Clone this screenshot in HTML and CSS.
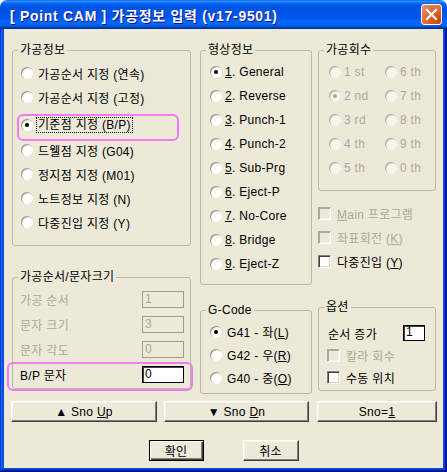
FILE: index.html
```html
<!DOCTYPE html>
<html lang="ko">
<head>
<meta charset="utf-8">
<title>Point CAM</title>
<link rel="stylesheet" href="styles.css">
</head>
<body>
<div class="window">
  <div class="titlebar">
    <span class="title">[ Point CAM ] 가공정보 입력 (v17-9501)</span>
    <span class="close"><svg width="13" height="13" viewBox="0 0 13 13"><path d="M2 2 L11 11 M11 2 L2 11" stroke="#fff" stroke-width="2.2" stroke-linecap="square"/></svg></span>
  </div>
  <div class="frame">
    <div class="client">
      <div class="columns">
        <div class="col col1">
          <div class="group g-info">
            <div class="gtitle">가공정보</div>
            <div class="list">
              <div class="rrow"><span class="radio"></span><span>가공순서 지정 (연속)</span></div>
              <div class="rrow"><span class="radio"></span><span>가공순서 지정 (고정)</span></div>
              <div class="rrow r3"><span class="radio on"></span><span class="focus">기준점 지정 (B/P)</span><span class="mark"></span></div>
              <div class="rrow r4"><span class="radio"></span><span>드웰점 지정 (G04)</span></div>
              <div class="rrow"><span class="radio"></span><span>정지점 지정 (M01)</span></div>
              <div class="rrow"><span class="radio"></span><span>노트정보 지정 (N)</span></div>
              <div class="rrow"><span class="radio"></span><span>다중진입 지정 (Y)</span></div>
            </div>
          </div>
          <div class="group g-size">
            <div class="gtitle">가공순서/문자크기</div>
            <div class="fields">
              <div class="frow dis"><span>가공 순서</span><span class="tbox">1</span></div>
              <div class="frow dis"><span>문자 크기</span><span class="tbox">3</span></div>
              <div class="frow dis"><span>문자 각도</span><span class="tbox">0</span></div>
              <div class="frow bp"><span>B/P 문자</span><span class="tbox">0</span><span class="mark"></span></div>
            </div>
          </div>
        </div>
        <div class="col col2">
          <div class="group g-shape">
            <div class="gtitle">형상정보</div>
            <div class="list">
              <div class="rrow"><span class="radio on"></span><span><u>1</u>. General</span></div>
              <div class="rrow"><span class="radio"></span><span><u>2</u>. Reverse</span></div>
              <div class="rrow"><span class="radio"></span><span><u>3</u>. Punch-1</span></div>
              <div class="rrow"><span class="radio"></span><span><u>4</u>. Punch-2</span></div>
              <div class="rrow"><span class="radio"></span><span><u>5</u>. Sub-Prg</span></div>
              <div class="rrow"><span class="radio"></span><span><u>6</u>. Eject-P</span></div>
              <div class="rrow"><span class="radio"></span><span><u>7</u>. No-Core</span></div>
              <div class="rrow"><span class="radio"></span><span><u>8</u>. Bridge</span></div>
              <div class="rrow"><span class="radio"></span><span><u>9</u>. Eject-Z</span></div>
            </div>
          </div>
          <div class="group g-gcode">
            <div class="gtitle">G-Code</div>
            <div class="list">
              <div class="rrow"><span class="radio on"></span><span>G41 - 좌(<u>L</u>)</span></div>
              <div class="rrow"><span class="radio"></span><span>G42 - 우(<u>R</u>)</span></div>
              <div class="rrow"><span class="radio"></span><span>G40 - 중(<u>O</u>)</span></div>
            </div>
          </div>
        </div>
        <div class="col col3">
          <div class="group g-count">
            <div class="gtitle">가공회수</div>
            <div class="grid2">
              <div class="rrow dis"><span class="radio"></span><span>1 st</span></div>
              <div class="rrow dis"><span class="radio"></span><span>6 th</span></div>
              <div class="rrow dis"><span class="radio on"></span><span>2 nd</span></div>
              <div class="rrow dis"><span class="radio"></span><span>7 th</span></div>
              <div class="rrow dis"><span class="radio"></span><span>3 rd</span></div>
              <div class="rrow dis"><span class="radio"></span><span>8 th</span></div>
              <div class="rrow dis"><span class="radio"></span><span>4 th</span></div>
              <div class="rrow dis"><span class="radio"></span><span>9 th</span></div>
              <div class="rrow dis"><span class="radio"></span><span>5 th</span></div>
              <div class="rrow dis"><span class="radio"></span><span>0 th</span></div>
            </div>
          </div>
          <div class="checks">
            <div class="crow dis"><span class="check"></span><span><u>M</u>ain 프로그램</span></div>
            <div class="crow dis"><span class="check"></span><span>좌표회전 (<u>K</u>)</span></div>
            <div class="crow"><span class="check"></span><span>다중진입 (<u>Y</u>)</span></div>
          </div>
          <div class="group g-opt">
            <div class="gtitle">옵션</div>
            <div class="opt-first"><span>순서 증가</span><span class="tbox small">1</span></div>
            <div class="crow dis"><span class="check"></span><span>칼라 회수</span></div>
            <div class="crow"><span class="check"></span><span>수동 위치</span></div>
          </div>
        </div>
      </div>
      <div class="btnrow">
        <span class="btn w1"><span>▲ Sno <u>U</u>p</span></span>
        <span class="btn w2"><span>▼ Sno <u>D</u>n</span></span>
        <span class="btn w3"><span>Sno=<u>1</u></span></span>
      </div>
      <div class="okrow">
        <span class="btn ok"><span>확인</span></span>
        <span class="btn cancel"><span>취소</span></span>
      </div>
    </div>
  </div>
</div>
</body>
</html>
```
FILE: styles.css
```css
* { box-sizing: border-box; }
html, body { margin: 0; padding: 0; background: #ffffff; }
body {
  font-family: "Liberation Sans", "Noto Sans CJK KR", sans-serif;
  font-size: 12px;
  letter-spacing: 0.3px;
  color: #000;
}
u { text-decoration: underline; text-underline-offset: 1px; }

.window {
  width: 447px;
  height: 472px;
  display: flex;
  flex-direction: column;
  border-radius: 7px 7px 0 0;
  overflow: hidden;
}
.titlebar {
  height: 29px;
  flex: none;
  display: flex;
  align-items: center;
  justify-content: space-between;
  padding: 0 5px 0 10px;
  background: linear-gradient(to bottom, #0058ee 0%, #3593ff 4%, #288eff 6%, #127dff 8%, #036ffc 10%, #0262ee 14%, #0057e5 20%, #0054e3 24%, #0055eb 56%, #005bf5 66%, #026afe 76%, #0062ef 86%, #0052d6 92%, #0040ab 94%, #003092 100%);
}
.title {
  color: #fff;
  font-weight: bold;
  font-size: 14px;
  letter-spacing: 0.7px;
  text-shadow: 1px 1px #0f1089;
  padding-top: 1px;
  white-space: nowrap;
}
.close {
  width: 21px;
  height: 21px;
  border: 1px solid #fff;
  border-radius: 3px;
  background: radial-gradient(circle at 85% 85%, #cc4600 0%, #dc6527 45%, #e2774a 70%, #e99a7f 100%);
  display: flex;
  align-items: center;
  justify-content: center;
}
.frame {
  flex: 1;
  padding: 0 4px 4px;
  background: #0a4ee2;
  box-shadow: inset -1px -1px #00138c, inset 1px 0 #0831d9, inset -2px -2px #001ea0, inset 2px 0 #166aee, inset -3px -3px #003bda, inset 3px 0 #0855dd;
}
.client {
  height: 100%;
  background: #ece9d8;
}

.columns {
  display: flex;
  align-items: flex-start;
  padding: 21px 0 0 8px;
}
.col1 { width: 179px; }
.col2 { width: 112px; margin-left: 9px; }
.col3 { width: 118px; margin-left: 6px; }

.group {
  border: 1px solid #bcb9a8;
  border-radius: 3px;
  position: relative;
}
.gtitle {
  width: fit-content;
  height: 14px;
  line-height: 14px;
  margin: -8px 0 0 5px;
  padding: 0 2px;
  background: #ece9d8;
  white-space: nowrap;
}

.rrow {
  display: flex;
  align-items: center;
  height: 24px;
  gap: 5px;
  white-space: nowrap;
  position: relative;
}
.radio {
  flex: none;
  width: 12px;
  height: 12px;
  border-radius: 50%;
  background: radial-gradient(circle at 65% 65%, #ffffff 45%, #e4e3dc 75%, #cfcdc2 100%);
  box-shadow: inset 1px 1px 0 #9c9a8f;
  position: relative;
}
.radio.on::after {
  content: "";
  position: absolute;
  left: 4px;
  top: 4px;
  width: 4px;
  height: 4px;
  border-radius: 50%;
  background: #000;
}
.dis { color: #aca899; }
.dis .radio {
  background: radial-gradient(circle at 65% 65%, #f6f5ef 45%, #e4e2d6 80%);
  box-shadow: inset 1px 1px 0 #aca899;
}
.dis .radio.on::after { background: #aca899; }

.g-info { height: 196px; }
.g-info .list { margin-top: 4px; padding-left: 8px; }
.g-info .r3 { margin-top: 4px; }
.g-info .r4 { margin-top: 1px; }
.focus {
  outline: 1px dotted #000;
  outline-offset: 0;
  padding: 0 1px;
  margin-left: -1px;
  line-height: 14px;
}
.mark {
  position: absolute;
  border: 2px solid #f07cf0;
  border-radius: 6px;
  pointer-events: none;
}
.r3 .mark { left: -4px; top: 1px; width: 162px; height: 27px; }

.g-size { height: 112px; margin-top: 31px; }
.fields { margin-top: 3px; padding: 0 6px 0 7px; }
.frow {
  display: flex;
  align-items: center;
  justify-content: space-between;
  height: 25px;
  position: relative;
}
.tbox {
  width: 42px;
  height: 17px;
  border: 1px solid #a09d90;
  line-height: 14px;
  padding-left: 2px;
  background: #ece9d8;
}
.bp .tbox {
  background: #fff;
  border: 1px solid #000;
  box-shadow: inset 1px 1px 0 #404040;
  color: #000;
}
.bp .mark { left: -13px; top: 0; width: 186px; height: 29px; }

.g-shape { height: 235px; }
.g-shape .list { margin-top: 3px; padding-left: 9px; }
.g-shape .rrow { gap: 3px; }

.g-gcode { height: 84px; margin-top: 25px; }
.g-gcode .list { margin-top: 3px; padding-left: 9px; }
.g-gcode .rrow { height: 23px; }

.g-count { height: 141px; }
.grid2 {
  display: grid;
  grid-template-columns: 56px 1fr;
  margin-top: 3px;
  padding-left: 10px;
}
.grid2 .rrow { gap: 3px; }

.checks { margin-top: 10px; }
.crow {
  display: flex;
  align-items: center;
  height: 24px;
  gap: 6px;
  white-space: nowrap;
}
.check {
  flex: none;
  width: 13px;
  height: 13px;
  background: #fff;
  border: 1px solid;
  border-color: #808080 #ffffff #ffffff #808080;
  box-shadow: inset 1px 1px 0 #404040, inset -1px -1px 0 #d4d0c8;
}
.crow.dis .check {
  background: #ece9d8;
  box-shadow: inset 1px 1px 0 #aca899, inset -1px -1px 0 #f4f3ee;
  border-color: #aca899 #ffffff #ffffff #aca899;
}

.g-opt { height: 84px; margin-top: 34px; }
.opt-first {
  display: flex;
  align-items: center;
  justify-content: space-between;
  height: 22px;
  margin-top: 8px;
  padding: 0 10px 0 9px;
}
.tbox.small {
  width: 22px;
  height: 16px;
  background: #fff;
  border: 1px solid #000;
  box-shadow: inset 1px 1px 0 #404040;
  line-height: 13px;
}
.g-opt .crow { height: 22px; padding-left: 8px; gap: 6px; }

.btn {
  display: flex;
  align-items: center;
  justify-content: center;
  height: 21px;
  background: #ece9d8;
  border: 1px solid;
  border-color: #ffffff #404040 #404040 #ffffff;
  box-shadow: inset -1px -1px 0 #808080, inset 1px 1px 0 #f4f3ee;
  white-space: nowrap;
}
.btnrow {
  display: flex;
  margin-top: 7px;
  padding-left: 7px;
}
.w1 { width: 146px; }
.w2 { width: 145px; margin-left: 7px; }
.w3 { width: 120px; margin-left: 8px; }
.okrow {
  display: flex;
  justify-content: center;
  gap: 39px;
  margin-top: 18px;
}
.ok {
  width: 55px;
  border: 1px solid #000;
  box-shadow: inset 1px 1px 0 #ffffff, inset -1px -1px 0 #404040, inset -2px -2px 0 #808080;
}
.cancel { width: 56px; }
```
